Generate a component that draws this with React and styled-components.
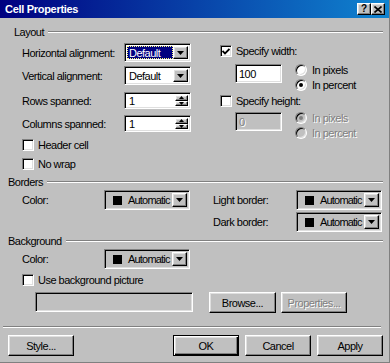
import React from "react";
import styled, { createGlobalStyle, css } from "styled-components";

const GlobalStyle = createGlobalStyle`
  html, body {
    margin: 0;
    padding: 0;
    background: #c0c0c0;
  }
  body {
    font-family: "Liberation Sans", Arial, sans-serif;
    font-size: 11px;
  }
  * {
    box-sizing: border-box;
  }
`;

const sunken = css`
  border: 1px solid;
  border-color: #808080 #fff #fff #808080;
  box-shadow: inset 1px 1px 0 #000, inset -1px -1px 0 #dfdfdf;
`;

const raised = css`
  border: 1px solid;
  border-color: #fff #000 #000 #fff;
  box-shadow: inset -1px -1px 0 #808080, inset 1px 1px 0 #dfdfdf;
  background: #c0c0c0;
`;

const disabledText = css`
  color: #808080;
  text-shadow: 1px 1px 0 #fff;
`;

const Window = styled.div`
  width: 390px;
  height: 363px;
  background: #c0c0c0;
  display: flex;
  flex-direction: column;
  color: #000;
  letter-spacing: -0.5px;
  overflow: hidden;
  border-right: 1px solid #808080;
  border-bottom: 1px solid #808080;
`;

const TitleBar = styled.div`
  height: 18px;
  flex: none;
  display: flex;
  align-items: center;
  justify-content: space-between;
  padding: 0 4px 0 5px;
  background: linear-gradient(to right, #000080, #1084d0);
  color: #fff;
  font-weight: bold;
  letter-spacing: -0.3px;
`;

const TitleButtons = styled.div`
  display: flex;
`;

const TitleButton = styled.div`
  ${raised};
  width: 14px;
  height: 12px;
  display: flex;
  align-items: center;
  justify-content: center;
  color: #000;
  font-size: 10px;
  font-weight: bold;
  line-height: 1;
  letter-spacing: 0;
`;

const GroupHeading = styled.div`
  display: flex;
  align-items: center;
  height: 14px;
  flex: none;
  margin-top: ${p => p.$top || 0}px;
  padding: 0 6px 0 ${p => p.$indent}px;
  white-space: nowrap;

  &::after {
    content: "";
    flex: 1;
    height: 0;
    margin-left: 4px;
    border-top: 1px solid #808080;
    border-bottom: 1px solid #fff;
  }
`;

const LayoutBody = styled.div`
  display: flex;
  height: 136px;
  flex: none;
  padding-left: 22px;
`;

const LeftCol = styled.div`
  width: 169px;
  display: flex;
  flex-direction: column;
  padding-top: 2px;
`;

const RightCol = styled.div`
  margin-left: ${p => p.$gap}px;
  display: flex;
  flex-direction: column;
  padding-top: ${p => p.$pad || 0}px;
`;

const FieldRow = styled.div`
  display: flex;
  align-items: center;
  height: ${p => p.$h}px;
  margin-top: ${p => p.$mt || 0}px;
  flex: none;
`;

const Label = styled.span`
  width: ${p => p.$w}px;
  flex: none;
  white-space: nowrap;
`;

const Combo = styled.div`
  ${sunken};
  width: ${p => p.$w}px;
  height: ${p => p.$h}px;
  display: flex;
  padding: 2px;
  background: ${p => p.$bg || "#fff"};
`;

const ComboValue = styled.div`
  flex: 1;
  min-width: 0;
  display: flex;
  align-items: center;
  padding-left: ${p => p.$pad || 2}px;
  gap: 6px;
  white-space: nowrap;
  overflow: hidden;
  letter-spacing: ${p => (p.$tight ? "-0.8px" : "inherit")};
  ${p =>
    p.$selected &&
    css`
      background: #000080;
      color: #fff;
      outline: 1px dotted #ffff80;
      outline-offset: -1px;
    `}
`;

const DropButton = styled.div`
  ${raised};
  width: 15px;
  flex: none;
  display: flex;
  align-items: center;
  justify-content: center;
`;

const Swatch = styled.span`
  width: 9px;
  height: 9px;
  background: #000;
  flex: none;
`;

const SpinField = styled.div`
  ${sunken};
  width: 67px;
  height: 17px;
  display: flex;
  padding: 2px;
  background: #fff;
`;

const SpinValue = styled.div`
  flex: 1;
  display: flex;
  align-items: center;
  padding-left: 2px;
`;

const SpinButtons = styled.div`
  width: 13px;
  display: flex;
  flex-direction: column;
`;

const SpinButton = styled.div`
  ${raised};
  flex: 1;
  display: flex;
  align-items: center;
  justify-content: center;
`;

const CheckRow = styled.label`
  display: flex;
  align-items: center;
  gap: 4px;
  height: ${p => p.$h}px;
  margin-top: ${p => p.$mt || 0}px;
  flex: none;
  white-space: nowrap;
`;

const CheckBox = styled.span`
  ${sunken};
  width: 12px;
  height: 12px;
  flex: none;
  background: #fff;
  display: flex;
  align-items: center;
  justify-content: center;
`;

const SubRow = styled.div`
  display: flex;
  align-items: flex-start;
  gap: 13px;
  padding-left: 15px;
  margin-top: ${p => p.$mt || 0}px;
`;

const TextBox = styled.div`
  ${sunken};
  width: ${p => p.$w}px;
  height: ${p => p.$h || 19}px;
  margin-top: ${p => p.$mt || 0}px;
  display: flex;
  align-items: center;
  padding-left: 3px;
  background: ${p => (p.$disabled ? "#c0c0c0" : "#fff")};
  ${p => p.$disabled && disabledText};
`;

const RadioGroup = styled.div`
  display: flex;
  flex-direction: column;
`;

const RadioRow = styled.div`
  display: flex;
  align-items: center;
  gap: 5px;
  height: 15px;
  white-space: nowrap;
  ${p => p.$disabled && disabledText};
`;

const Radio = styled.span`
  width: 12px;
  height: 12px;
  flex: none;
  border-radius: 50%;
  border: 1px solid;
  border-color: #808080 #fff #fff #808080;
  box-shadow: inset 1px 1px 0 #000, inset -1px -1px 0 #dfdfdf;
  background: ${p => (p.$disabled ? "#c0c0c0" : "#fff")};
  display: flex;
  align-items: center;
  justify-content: center;

  &::after {
    content: "";
    width: 4px;
    height: 4px;
    border-radius: 50%;
    background: ${p => (p.$disabled ? "#808080" : "#000")};
    display: ${p => (p.$checked ? "block" : "none")};
  }
`;

const BordersBody = styled.div`
  display: flex;
  height: 45px;
  flex: none;
  padding-left: 22px;
`;

const BackgroundBody = styled.div`
  display: flex;
  flex-direction: column;
  padding-left: 22px;
`;

const PictureRow = styled.div`
  display: flex;
  align-items: flex-start;
  height: 21px;
  margin-top: 2px;
  padding-left: 13px;
`;

const Button = styled.button`
  ${raised};
  width: ${p => p.$w || 66}px;
  height: 21px;
  margin-left: ${p => p.$ml || 0}px;
  padding: 0;
  font-family: inherit;
  font-size: 11px;
  letter-spacing: -0.5px;
  color: #000;
  flex: none;
  ${p => p.disabled && disabledText};
  ${p =>
    p.$default &&
    css`
      border: 1px solid #000;
      box-shadow: inset 1px 1px 0 #fff, inset -1px -1px 0 #000,
        inset -2px -2px 0 #808080, inset 2px 2px 0 #dfdfdf;
    `}
`;

const Separator = styled.div`
  height: 0;
  margin: 13px 8px 0 3px;
  border-top: 1px solid #808080;
  border-bottom: 1px solid #fff;
  flex: none;
`;

const ButtonBar = styled.div`
  display: flex;
  align-items: center;
  gap: 6px;
  margin-top: 7px;
  padding: 0 6px 0 8px;
`;

const Spacer = styled.div`
  flex: 1;
`;

const DownArrow = ({ w = 7, h = 4 }) => (
  <svg width={w} height={h} viewBox={`0 0 ${w} ${h}`}>
    <polygon points={`0,0 ${w},0 ${w / 2},${h}`} fill="#000" />
  </svg>
);

const UpArrow = () => (
  <svg width="5" height="3" viewBox="0 0 5 3">
    <polygon points="0,3 5,3 2.5,0" fill="#000" />
  </svg>
);

const CheckMark = () => (
  <svg width="8" height="7" viewBox="0 0 8 7">
    <path d="M0.5 3 L3 5.5 L7.5 1" stroke="#000" strokeWidth="1.8" fill="none" />
  </svg>
);

const CloseGlyph = () => (
  <svg width="8" height="7" viewBox="0 0 8 7">
    <path d="M0.5 0.5 L7.5 6.5 M7.5 0.5 L0.5 6.5" stroke="#000" strokeWidth="1.6" />
  </svg>
);

function Select({ value, selected }) {
  return (
    <Combo $w={67} $h={19}>
      <ComboValue $selected={selected}>{value}</ComboValue>
      <DropButton>
        <DownArrow />
      </DropButton>
    </Combo>
  );
}

function ColorSelect() {
  return (
    <Combo $w={86} $h={20} $bg="#c0c0c0">
      <ComboValue $pad={6} $tight>
        <Swatch />
        Automatic
      </ComboValue>
      <DropButton>
        <DownArrow />
      </DropButton>
    </Combo>
  );
}

function Spinner({ value }) {
  return (
    <SpinField>
      <SpinValue>{value}</SpinValue>
      <SpinButtons>
        <SpinButton>
          <UpArrow />
        </SpinButton>
        <SpinButton>
          <DownArrow w={5} h={3} />
        </SpinButton>
      </SpinButtons>
    </SpinField>
  );
}

export default function App() {
  return (
    <Window>
      <GlobalStyle />
      <TitleBar>
        <span>Cell Properties</span>
        <TitleButtons>
          <TitleButton>?</TitleButton>
          <TitleButton>
            <CloseGlyph />
          </TitleButton>
        </TitleButtons>
      </TitleBar>

      <GroupHeading $indent={14} $top={7}>Layout</GroupHeading>
      <LayoutBody>
        <LeftCol>
          <FieldRow $h={23}>
            <Label $w={102}>Horizontal alignment:</Label>
            <Select value="Default" selected />
          </FieldRow>
          <FieldRow $h={23}>
            <Label $w={102}>Vertical alignment:</Label>
            <Select value="Default" />
          </FieldRow>
          <FieldRow $h={23} $mt={2}>
            <Label $w={102}>Rows spanned:</Label>
            <Spinner value="1" />
          </FieldRow>
          <FieldRow $h={23}>
            <Label $w={102}>Columns spanned:</Label>
            <Spinner value="1" />
          </FieldRow>
          <CheckRow $h={19}>
            <CheckBox />
            Header cell
          </CheckRow>
          <CheckRow $h={19}>
            <CheckBox />
            No wrap
          </CheckRow>
        </LeftCol>

        <RightCol $gap={29} $pad={6}>
          <CheckRow $h={12}>
            <CheckBox>
              <CheckMark />
            </CheckBox>
            Specify width:
          </CheckRow>
          <SubRow $mt={5}>
            <TextBox $w={47} $mt={2}>100</TextBox>
            <RadioGroup>
              <RadioRow>
                <Radio />
                In pixels
              </RadioRow>
              <RadioRow>
                <Radio $checked />
                In percent
              </RadioRow>
            </RadioGroup>
          </SubRow>
          <CheckRow $h={12} $mt={3}>
            <CheckBox />
            Specify height:
          </CheckRow>
          <SubRow $mt={3}>
            <TextBox $w={47} $mt={2} $disabled>0</TextBox>
            <RadioGroup>
              <RadioRow $disabled>
                <Radio $checked $disabled />
                In pixels
              </RadioRow>
              <RadioRow $disabled>
                <Radio $disabled />
                In percent
              </RadioRow>
            </RadioGroup>
          </SubRow>
        </RightCol>
      </LayoutBody>

      <GroupHeading $indent={8}>Borders</GroupHeading>
      <BordersBody>
        <FieldRow $h={22}>
          <Label $w={82}>Color:</Label>
          <ColorSelect />
        </FieldRow>
        <RightCol $gap={23}>
          <FieldRow $h={22}>
            <Label $w={83}>Light border:</Label>
            <ColorSelect />
          </FieldRow>
          <FieldRow $h={22}>
            <Label $w={83}>Dark border:</Label>
            <ColorSelect />
          </FieldRow>
        </RightCol>
      </BordersBody>

      <GroupHeading $indent={8}>Background</GroupHeading>
      <BackgroundBody>
        <FieldRow $h={22}>
          <Label $w={82}>Color:</Label>
          <ColorSelect />
        </FieldRow>
        <CheckRow $h={20}>
          <CheckBox />
          Use background picture
        </CheckRow>
        <PictureRow>
          <TextBox $w={158} $h={20} $disabled />
          <Button $w={67} $ml={16}>Browse...</Button>
          <Button $ml={5} disabled>Properties...</Button>
        </PictureRow>
      </BackgroundBody>

      <Separator />
      <ButtonBar>
        <Button>Style...</Button>
        <Spacer />
        <Button $default>OK</Button>
        <Button>Cancel</Button>
        <Button>Apply</Button>
      </ButtonBar>
    </Window>
  );
}
